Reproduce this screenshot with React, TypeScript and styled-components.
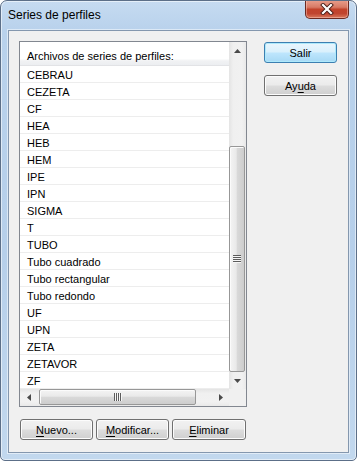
import styled, { createGlobalStyle } from "styled-components";

const GlobalStyle = createGlobalStyle`
  html, body {
    margin: 0;
    padding: 0;
    background: #ffffff;
  }
  body {
    font-family: "Liberation Sans", Arial, sans-serif;
  }
`;

const items = [
  "CEBRAU",
  "CEZETA",
  "CF",
  "HEA",
  "HEB",
  "HEM",
  "IPE",
  "IPN",
  "SIGMA",
  "T",
  "TUBO",
  "Tubo cuadrado",
  "Tubo rectangular",
  "Tubo redondo",
  "UF",
  "UPN",
  "ZETA",
  "ZETAVOR",
  "ZF",
];

const Window = styled.div`
  width: 357px;
  height: 461px;
  box-sizing: border-box;
  border: 1px solid #5c6f88;
  border-radius: 7px 7px 5px 5px;
  background: linear-gradient(180deg, #c6dbf1 0%, #b9d2ec 28px, #b6cfea 55%, #c2d8ee 100%);
  box-shadow: inset 0 0 0 1px rgba(255, 255, 255, 0.55);
  display: flex;
  flex-direction: column;
  padding: 0 7px 7px;
  overflow: hidden;
`;

const TitleBar = styled.div`
  height: 29px;
  display: flex;
  justify-content: space-between;
  align-items: flex-start;
`;

const Title = styled.span`
  padding-top: 7px;
  font-size: 12px;
  line-height: 15px;
  color: #000;
`;

const CloseButton = styled.div`
  width: 44px;
  height: 19px;
  margin-top: -1px;
  box-sizing: border-box;
  border: 1px solid #6b2a22;
  border-top: none;
  border-radius: 0 0 5px 5px;
  background: linear-gradient(180deg, #e9a08e 0%, #d87a65 40%, #c2432b 52%, #c04530 75%, #d9785c 100%);
  box-shadow: inset 0 0 0 1px rgba(255, 210, 200, 0.45);
  display: flex;
  align-items: center;
  justify-content: center;
`;

const Client = styled.div`
  height: 423px;
  box-sizing: border-box;
  border: 1px solid #8497ae;
  box-shadow: 0 0 0 1px rgba(255, 255, 255, 0.5);
  background: #f0f0f0;
  display: grid;
  grid-template-columns: 228px 73px;
  column-gap: 17px;
  align-items: start;
  padding: 10px 0 0 10px;
`;

const LeftColumn = styled.div`
  display: flex;
  flex-direction: column;
`;

const RightColumn = styled.div`
  display: flex;
  flex-direction: column;
  gap: 12px;
  padding-top: 1px;
`;

const ListBox = styled.div`
  width: 228px;
  height: 366px;
  box-sizing: border-box;
  border: 1px solid #828790;
  background: #ffffff;
  display: grid;
  grid-template-columns: 1fr 17px;
  grid-template-rows: 1fr 17px;
  overflow: hidden;
`;

const ListContent = styled.div`
  overflow: hidden;
  font-size: 11px;
  color: #000;
`;

const HeaderRow = styled.div`
  height: 24px;
  box-sizing: border-box;
  padding: 4px 0 0 7px;
  display: flex;
  align-items: center;
  background: linear-gradient(180deg, #ffffff 0%, #ffffff 72%, #f1f2f4 82%, #eceef1 100%);
  border-bottom: 1px solid #e2e3e6;
  white-space: nowrap;
`;

const Row = styled.div`
  height: 17px;
  box-sizing: border-box;
  padding: 2px 0 0 7px;
  display: flex;
  align-items: center;
  border-bottom: 1px solid #ededed;
  white-space: nowrap;
`;

const VScroll = styled.div`
  display: flex;
  flex-direction: column;
  background: linear-gradient(90deg, #e4e4e4 0%, #f0f0f0 25%, #f1f1f1 75%, #e9e9e9 100%);
`;

const HScroll = styled.div`
  display: flex;
  background: linear-gradient(180deg, #e4e4e4 0%, #f0f0f0 25%, #f1f1f1 75%, #e9e9e9 100%);
`;

const ArrowCell = styled.div`
  width: 17px;
  height: 17px;
  flex: none;
  display: flex;
  align-items: center;
  justify-content: center;
`;

const VTrack = styled.div`
  flex: 1;
  display: flex;
  flex-direction: column;
  justify-content: flex-end;
`;

const HTrack = styled.div`
  flex: 1;
  display: flex;
  align-items: stretch;
  padding-left: 2px;
`;

const Thumb = styled.div<{ $vertical?: boolean }>`
  box-sizing: border-box;
  border: 1px solid #979797;
  border-radius: 2px;
  display: flex;
  align-items: center;
  justify-content: center;
  box-shadow: inset 1px 1px 0 #fbfbfb;
  ${(p) =>
    p.$vertical
      ? `
    margin: 0 1px 0 0;
    background: linear-gradient(90deg, #f4f4f4 0%, #e9e9e9 45%, #d9d9d9 50%, #cdcdcd 100%);
  `
      : `
    margin: 0 0 1px 0;
    background: linear-gradient(180deg, #f4f4f4 0%, #e9e9e9 45%, #d9d9d9 50%, #cdcdcd 100%);
  `}
`;

const Corner = styled.div`
  background: #f0f0f0;
`;

const ButtonRow = styled.div`
  display: flex;
  gap: 3px;
  margin: 12px 0 0 1px;
`;

const Button = styled.div<{ $default?: boolean; $width?: number }>`
  width: ${(p) => p.$width ?? 73}px;
  height: 21px;
  box-sizing: border-box;
  border: 1px solid ${(p) => (p.$default ? "#3c7fb1" : "#707070")};
  border-radius: 3px;
  display: flex;
  align-items: center;
  justify-content: center;
  font-size: 11px;
  color: #000;
  background: ${(p) =>
    p.$default
      ? "linear-gradient(180deg, #eaf6fd 0%, #d9f0fc 48%, #bee6fd 52%, #a7d9f5 100%)"
      : "linear-gradient(180deg, #f2f2f2 0%, #ebebeb 48%, #dddddd 52%, #cfcfcf 100%)"};
  box-shadow: inset 0 0 0 1px ${(p) => (p.$default ? "#aee9fb" : "#fcfcfc")};
`;

const Mnemonic = styled.span`
  text-decoration: underline;
  text-underline-offset: 2px;
`;

const UpArrow = () => (
  <svg width="7" height="4" viewBox="0 0 7 4">
    <polygon points="3.5,0 7,4 0,4" fill="#4a4a4a" />
  </svg>
);

const DownArrow = () => (
  <svg width="7" height="4" viewBox="0 0 7 4">
    <polygon points="0,0 7,0 3.5,4" fill="#4a4a4a" />
  </svg>
);

const LeftArrow = () => (
  <svg width="4" height="7" viewBox="0 0 4 7">
    <polygon points="4,0 4,7 0,3.5" fill="#4a4a4a" />
  </svg>
);

const RightArrow = () => (
  <svg width="4" height="7" viewBox="0 0 4 7">
    <polygon points="0,0 4,3.5 0,7" fill="#4a4a4a" />
  </svg>
);

const Grip = ({ vertical }: { vertical?: boolean }) =>
  vertical ? (
    <svg width="8" height="8" viewBox="0 0 8 8">
      {[0, 2, 4, 6].map((y) => (
        <g key={y}>
          <rect x="0" y={y} width="8" height="1" fill="#5c5c5c" />
          <rect x="0" y={y + 1} width="8" height="1" fill="#f6f6f6" />
        </g>
      ))}
    </svg>
  ) : (
    <svg width="8" height="8" viewBox="0 0 8 8">
      {[0, 2, 4, 6].map((x) => (
        <g key={x}>
          <rect x={x} y="0" width="1" height="8" fill="#5c5c5c" />
          <rect x={x + 1} y="0" width="1" height="8" fill="#f6f6f6" />
        </g>
      ))}
    </svg>
  );

const CloseGlyph = () => (
  <svg width="14" height="12" viewBox="0 0 14 12">
    <path d="M3 2 L11 10 M11 2 L3 10" stroke="#4a1c16" strokeWidth="4" strokeLinecap="square" />
    <path d="M3 2 L11 10 M11 2 L3 10" stroke="#ffffff" strokeWidth="2.2" strokeLinecap="square" />
  </svg>
);

export default function App() {
  return (
    <>
      <GlobalStyle />
      <Window>
        <TitleBar>
          <Title>Series de perfiles</Title>
          <CloseButton>
            <CloseGlyph />
          </CloseButton>
        </TitleBar>
        <Client>
          <LeftColumn>
            <ListBox>
              <ListContent>
                <HeaderRow>Archivos de series de perfiles:</HeaderRow>
                {items.map((name) => (
                  <Row key={name}>{name}</Row>
                ))}
              </ListContent>
              <VScroll>
                <ArrowCell>
                  <UpArrow />
                </ArrowCell>
                <VTrack>
                  <Thumb $vertical style={{ height: 226 }}>
                    <Grip vertical />
                  </Thumb>
                </VTrack>
                <ArrowCell>
                  <DownArrow />
                </ArrowCell>
              </VScroll>
              <HScroll>
                <ArrowCell>
                  <LeftArrow />
                </ArrowCell>
                <HTrack>
                  <Thumb style={{ width: 157 }}>
                    <Grip />
                  </Thumb>
                </HTrack>
                <ArrowCell>
                  <RightArrow />
                </ArrowCell>
              </HScroll>
              <Corner />
            </ListBox>
            <ButtonRow>
              <Button>
                <Mnemonic>N</Mnemonic>uevo...
              </Button>
              <Button>
                <Mnemonic>M</Mnemonic>odificar...
              </Button>
              <Button $width={74}>
                <Mnemonic>E</Mnemonic>liminar
              </Button>
            </ButtonRow>
          </LeftColumn>
          <RightColumn>
            <Button $default>Salir</Button>
            <Button>
              Ay<Mnemonic>u</Mnemonic>da
            </Button>
          </RightColumn>
        </Client>
      </Window>
    </>
  );
}
